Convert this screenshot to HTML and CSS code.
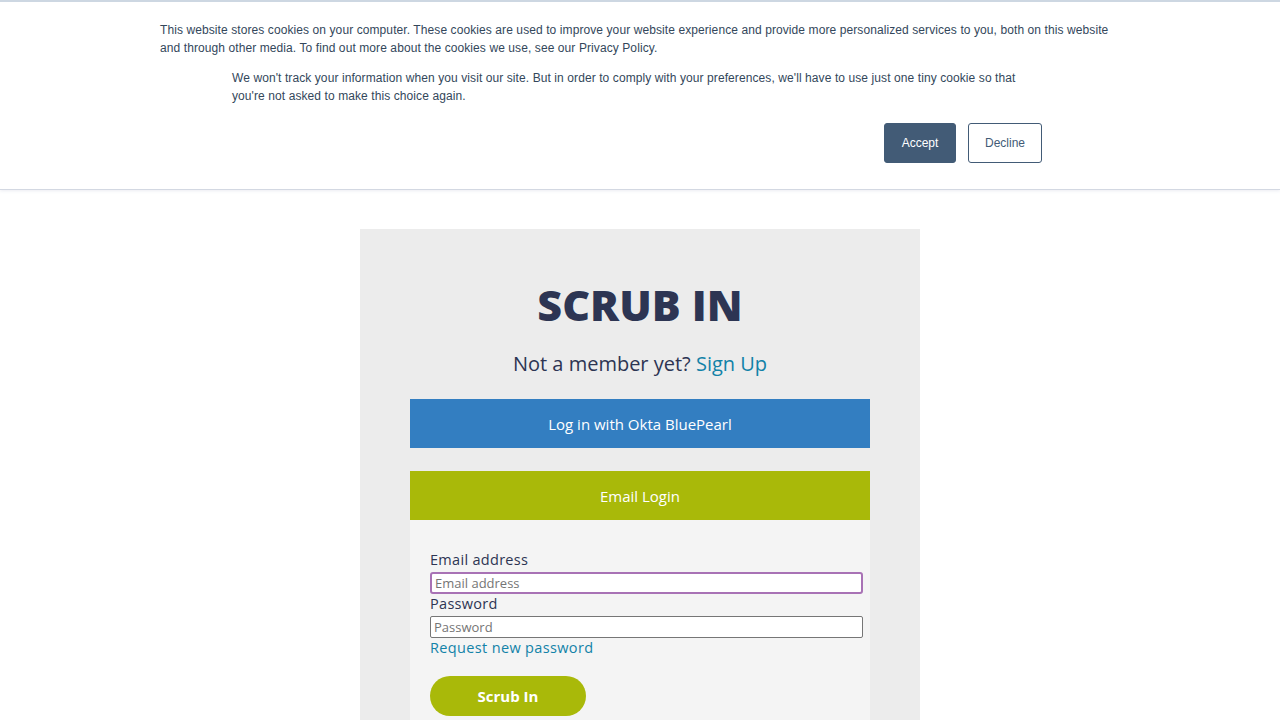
FILE: index.html
```html
<!DOCTYPE html>
<html>
<head>
<meta charset="utf-8">
<link rel="stylesheet" href="styles.css">
</head>
<body>
<div class="cookie">
  <p class="cookie-main">This website stores cookies on your computer. These cookies are used to improve your website experience and provide more personalized services to you, both on this website and through other media. To find out more about the cookies we use, see our Privacy Policy.</p>
  <div class="cookie-inner">
    <p class="cookie-sub">We won't track your information when you visit our site. But in order to comply with your preferences, we'll have to use just one tiny cookie so that you're not asked to make this choice again.</p>
    <div class="cookie-buttons">
      <button class="btn-accept">Accept</button>
      <button class="btn-decline">Decline</button>
    </div>
  </div>
</div>
<main class="page">
  <section class="card">
    <h1 class="title">SCRUB IN</h1>
    <p class="member">Not a member yet? <a class="link" href="#">Sign Up</a></p>
    <div class="okta">Log in with Okta BluePearl</div>
    <div class="email-head">Email Login</div>
    <form class="form">
      <label class="label">Email address</label>
      <input class="field focus" type="text" placeholder="Email address">
      <label class="label">Password</label>
      <input class="field" type="password" placeholder="Password">
      <a class="forgot" href="#">Request new password</a>
      <button class="submit" type="button">Scrub In</button>
    </form>
  </section>
</main>
</body>
</html>
```
FILE: styles.css
```css
html, body {
  margin: 0;
  padding: 0;
  background: #ffffff;
  height: 100%;
  overflow: hidden;
}
body {
  font-family: "Open Sans", sans-serif;
}
.cookie {
  border-top: 2px solid #cdd7e2;
  border-bottom: 1px solid #d3d8e2;
  box-shadow: 0 1px 3px rgba(120, 130, 170, 0.15);
  height: 187px;
  box-sizing: content-box;
  font-family: "Liberation Sans", Arial, sans-serif;
  color: #33475b;
  font-size: 12px;
  line-height: 18px;
  letter-spacing: 0.09px;
}
.cookie-main {
  margin: 19px 160px 0 160px;
}
.cookie-inner {
  margin: 12px 232px 0 232px;
}
.cookie-sub {
  margin: 0;
  padding-right: 30px;
}
.cookie-buttons {
  display: flex;
  justify-content: flex-end;
  gap: 12px;
  margin-top: 18px;
  padding-right: 6px;
}
.cookie-buttons button {
  font-family: "Liberation Sans", Arial, sans-serif;
  font-size: 12px;
  height: 40px;
  border-radius: 3px;
  cursor: pointer;
}
.btn-accept {
  width: 72px;
  background: #425b76;
  border: 1px solid #425b76;
  color: #ffffff;
}
.btn-decline {
  width: 74px;
  background: #ffffff;
  border: 1px solid #425b76;
  color: #425b76;
}
.page {
  display: flex;
  justify-content: center;
  padding-top: 39px;
}
.card {
  width: 560px;
  background: #ececec;
  padding: 0 50px;
  box-sizing: border-box;
  min-height: 600px;
  font-family: "Open Sans", sans-serif;
  color: #2d3553;
}
.title {
  margin: 51px 0 0 0;
  text-align: center;
  font-size: 43px;
  line-height: 50px;
  font-weight: 800;
  color: #2d3553;
  letter-spacing: 0;
}
.member {
  margin: 22px 0 0 0;
  text-align: center;
  font-size: 20px;
  line-height: 24px;
}
.link {
  color: #1282a8;
  text-decoration: none;
}
.okta {
  margin-top: 23px;
  height: 49px;
  background: #337ec1;
  color: #ffffff;
  display: flex;
  align-items: center;
  justify-content: center;
  font-size: 15px;
}
.email-head {
  margin-top: 23px;
  height: 49px;
  background: #a9b909;
  color: #ffffff;
  display: flex;
  align-items: center;
  justify-content: center;
  font-size: 15px;
}
.form {
  background: #f4f4f4;
  padding: 30px 7px 40px 20px;
  display: flex;
  flex-direction: column;
  align-items: flex-start;
  min-height: 300px;
}
.label {
  font-size: 14.5px;
  line-height: 20px;
  color: #2d3553;
  margin-bottom: 2px;
  letter-spacing: 0.3px;
}
.field {
  width: 100%;
  height: 22px;
  box-sizing: border-box;
  border: 1px solid #767676;
  border-radius: 2px;
  background: #ffffff;
  padding: 0 3px;
  font-family: "Open Sans", sans-serif;
  font-size: 13px;
  color: #333;
  margin: 0;
  outline: none;
}
.field::placeholder {
  color: #757575;
}
.field.focus {
  border: 2px solid #a872b5;
  border-radius: 3px;
}
.forgot {
  color: #1282a8;
  text-decoration: none;
  font-size: 14.5px;
  line-height: 18px;
  margin-top: 1px;
  letter-spacing: 0.35px;
}
.submit {
  margin-top: 19px;
  width: 156px;
  height: 40px;
  border: none;
  border-radius: 20px;
  background: #a9b909;
  color: #ffffff;
  font-family: "Open Sans", sans-serif;
  font-weight: 700;
  font-size: 15px;
}
```
